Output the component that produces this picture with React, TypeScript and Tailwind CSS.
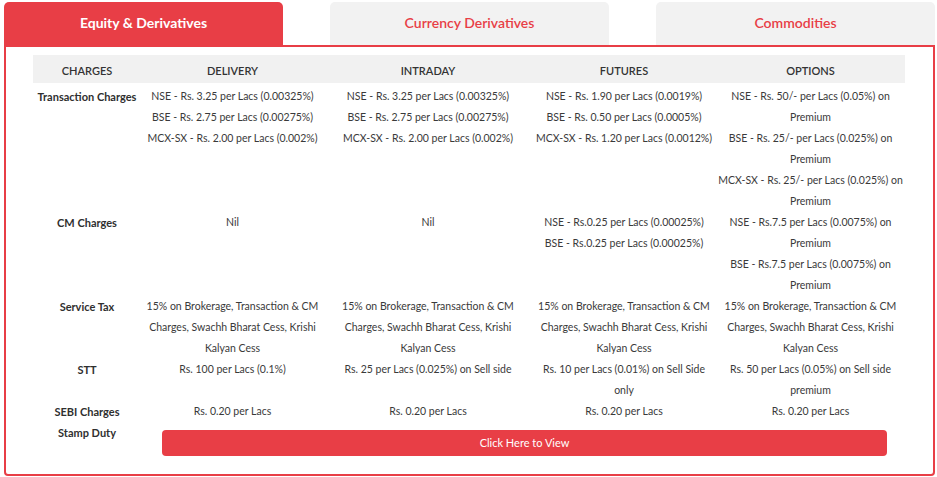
import React from 'react';

const RED = 'bg-[#e83e46]';

const tax = ['15% on Brokerage, Transaction & CM', 'Charges, Swachh Bharat Cess, Krishi', 'Kalyan Cess'];

// each cell is a list of display lines, broken where the original table wraps
const rows: { label: string; cells: string[][] }[] = [
  {
    label: 'Transaction Charges',
    cells: [
      ['NSE - Rs. 3.25 per Lacs (0.00325%)', 'BSE - Rs. 2.75 per Lacs (0.00275%)', 'MCX-SX - Rs. 2.00 per Lacs (0.002%)'],
      ['NSE - Rs. 3.25 per Lacs (0.00325%)', 'BSE - Rs. 2.75 per Lacs (0.00275%)', 'MCX-SX - Rs. 2.00 per Lacs (0.002%)'],
      ['NSE - Rs. 1.90 per Lacs (0.0019%)', 'BSE - Rs. 0.50 per Lacs (0.0005%)', 'MCX-SX - Rs. 1.20 per Lacs (0.0012%)'],
      [
        'NSE - Rs. 50/- per Lacs (0.05%) on',
        'Premium',
        'BSE - Rs. 25/- per Lacs (0.025%) on',
        'Premium',
        'MCX-SX - Rs. 25/- per Lacs (0.025%) on',
        'Premium',
      ],
    ],
  },
  {
    label: 'CM Charges',
    cells: [
      ['Nil'],
      ['Nil'],
      ['NSE - Rs.0.25 per Lacs (0.00025%)', 'BSE - Rs.0.25 per Lacs (0.00025%)'],
      ['NSE - Rs.7.5 per Lacs (0.0075%) on', 'Premium', 'BSE - Rs.7.5 per Lacs (0.0075%) on', 'Premium'],
    ],
  },
  {
    label: 'Service Tax',
    cells: [tax, tax, tax, tax],
  },
  {
    label: 'STT',
    cells: [
      ['Rs. 100 per Lacs (0.1%)'],
      ['Rs. 25 per Lacs (0.025%) on Sell side'],
      ['Rs. 10 per Lacs (0.01%) on Sell Side', 'only'],
      ['Rs. 50 per Lacs (0.05%) on Sell side', 'premium'],
    ],
  },
  {
    label: 'SEBI Charges',
    cells: [['Rs. 0.20 per Lacs'], ['Rs. 0.20 per Lacs'], ['Rs. 0.20 per Lacs'], ['Rs. 0.20 per Lacs']],
  },
];

const tabs = ['Equity & Derivatives', 'Currency Derivatives', 'Commodities'];

const App: React.FC = () => {
  return (
    <div className="w-[937px] h-[477px] bg-white font-['Lato','Liberation_Sans',sans-serif] pt-[2px] pl-[4px]">
      <div className="w-[931px]">
        <div className="flex justify-between">
          {tabs.map((t, i) => (
            <div
              key={t}
              className={`w-[279px] h-[43px] pb-[3px] rounded-t-[5px] flex items-center justify-center text-[14px] ${
                i === 0 ? `${RED} text-white font-bold` : 'bg-[#f2f2f2] text-[#e83e46] font-semibold'
              }`}
            >
              {t}
            </div>
          ))}
        </div>

        <div className="border-2 border-[#e83e46] rounded-b-[4px] h-[431px] pt-[8px] pl-[27px] pr-[26px]">
          <table className="table-fixed w-[872px] border-collapse text-[10.5px] text-[#3a3a3a]">
            <colgroup>
              <col className="w-[108px]" />
              <col className="w-[183px]" />
              <col className="w-[208px]" />
              <col className="w-[184px]" />
              <col className="w-[189px]" />
            </colgroup>
            <thead>
              <tr className="bg-[#f1f1f1] h-[28px] text-[#333] text-[11px]">
                {['CHARGES', 'DELIVERY', 'INTRADAY', 'FUTURES', 'OPTIONS'].map((h) => (
                  <th key={h} className="font-semibold text-center pt-[4px] px-0 pb-0">
                    {h}
                  </th>
                ))}
              </tr>
            </thead>
            <tbody>
              {rows.map((r, ri) => (
                <tr key={r.label}>
                  <td className={`align-top text-center text-[11px] font-bold text-[#2f2f2f] leading-[21px] p-0 ${ri === 0 ? 'pt-[3px]' : ''}`}>
                    {r.label}
                  </td>
                  {r.cells.map((c, ci) => (
                    <td key={ci} className={`align-top text-center leading-[21px] whitespace-nowrap p-0 ${ri === 0 ? 'pt-[3px]' : ''}`}>
                      {c.map((line, li) => (
                        <div key={li}>{line}</div>
                      ))}
                    </td>
                  ))}
                </tr>
              ))}
              <tr>
                <td className="align-top text-center text-[11px] font-bold text-[#2f2f2f] leading-[21px] p-0">Stamp Duty</td>
                <td colSpan={4} className="pt-[8px] pl-[21px] pr-[18px] pb-0">
                  <button className={`w-full h-[26px] rounded-[4px] ${RED} text-white text-[11px] flex items-center justify-center`}>
                    Click Here to View
                  </button>
                </td>
              </tr>
            </tbody>
          </table>
        </div>
      </div>
    </div>
  );
};

export default App;
